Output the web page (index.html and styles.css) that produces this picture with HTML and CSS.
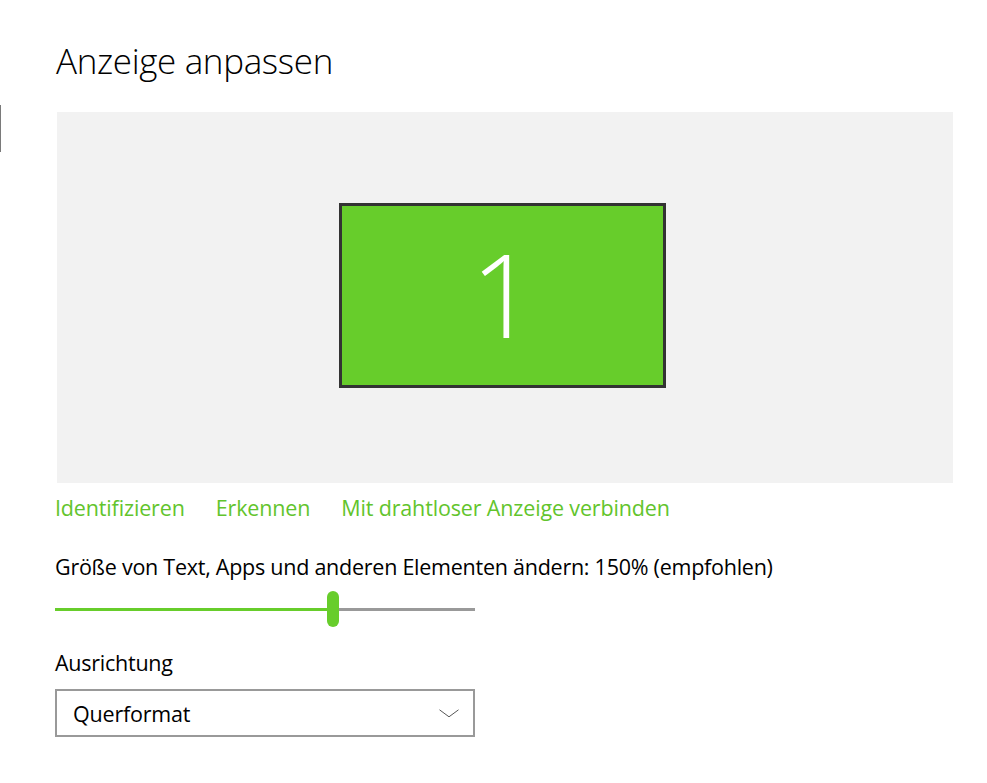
FILE: index.html
```html
<!DOCTYPE html>
<html lang="de">
<head>
<meta charset="utf-8">
<title>Anzeige anpassen</title>
<link rel="stylesheet" href="styles.css">
</head>
<body>
<div class="page">
  <div class="edge"></div>
  <main class="main">
    <h1 class="title">Anzeige anpassen</h1>
    <div class="preview">
      <div class="monitor"><span class="num">1</span></div>
    </div>
    <div class="links">
      <a class="link">Identifizieren</a>
      <a class="link">Erkennen</a>
      <a class="link">Mit drahtloser Anzeige verbinden</a>
    </div>
    <div class="label scale-label">Größe von Text, Apps und anderen Elementen ändern: 150% (empfohlen)</div>
    <div class="slider">
      <div class="fill"></div>
      <div class="thumb"></div>
      <div class="rest"></div>
    </div>
    <div class="label orient-label">Ausrichtung</div>
    <div class="combo">
      <span class="combo-text">Querformat</span>
      <svg class="chev" width="20" height="9" viewBox="0 0 20 9"><path d="M0.5 0.8 L10 7.8 L19.5 0.8" fill="none" stroke="#444" stroke-width="0.9"/></svg>
    </div>
  </main>
</div>
</body>
</html>
```
FILE: styles.css
```css
html, body {
  margin: 0;
  padding: 0;
  background: #fff;
}
body {
  width: 987px;
  height: 783px;
  overflow: hidden;
  font-family: "Open Sans", "Noto Sans", sans-serif;
  color: #000;
}
.page {
  display: flex;
  align-items: flex-start;
}
.edge {
  width: 1px;
  height: 47px;
  margin-top: 105px;
  background: #7a7a7a;
}
.main {
  margin-left: 54px;
  display: flex;
  flex-direction: column;
  align-items: flex-start;
}
.title {
  margin: 0 0 0 1px;
  padding-top: 36px;
  font-size: 35px;
  font-weight: 300;
  line-height: 50px;
  letter-spacing: -0.35px;
  color: #000;
}
.preview {
  margin-top: 26px;
  margin-left: 2px;
  width: 896px;
  height: 371px;
  background: #f2f2f2;
  box-sizing: border-box;
  padding-left: 282px;
  padding-top: 91px;
}
.monitor {
  width: 327px;
  height: 185px;
  box-sizing: border-box;
  border: 3px solid #333;
  background: #67cd2b;
  display: flex;
  align-items: center;
  justify-content: center;
}
.num {
  font-size: 116px;
  font-weight: 300;
  color: #fff;
  line-height: 1;
  margin-left: 2px;
  margin-top: -6px;
}
.links {
  display: flex;
  gap: 31px;
  margin-top: 10px;
  margin-left: 0;
}
.link {
  font-size: 21.5px;
  line-height: 30px;
  color: #62c42c;
  letter-spacing: -0.15px;
}
.label {
  font-size: 21.5px;
  line-height: 30px;
  letter-spacing: -0.25px;
}
.scale-label {
  margin-top: 29px;
}
.slider {
  margin-top: 9px;
  width: 420px;
  height: 36px;
  display: flex;
  align-items: center;
}
.fill {
  width: 272px;
  height: 3px;
  background: #67cd2b;
}
.thumb {
  width: 12px;
  height: 36px;
  border-radius: 6px;
  background: #67cd2b;
}
.rest {
  flex: 1;
  height: 3px;
  background: #999;
}
.orient-label {
  margin-top: 21px;
}
.combo {
  margin-top: 11px;
  width: 420px;
  height: 48px;
  box-sizing: border-box;
  border: 2px solid #999;
  display: flex;
  align-items: center;
  justify-content: space-between;
  padding: 0 14px 0 16px;
}
.combo-text {
  font-size: 21.5px;
  letter-spacing: -0.2px;
}
.chev {
  display: block;
}
```
